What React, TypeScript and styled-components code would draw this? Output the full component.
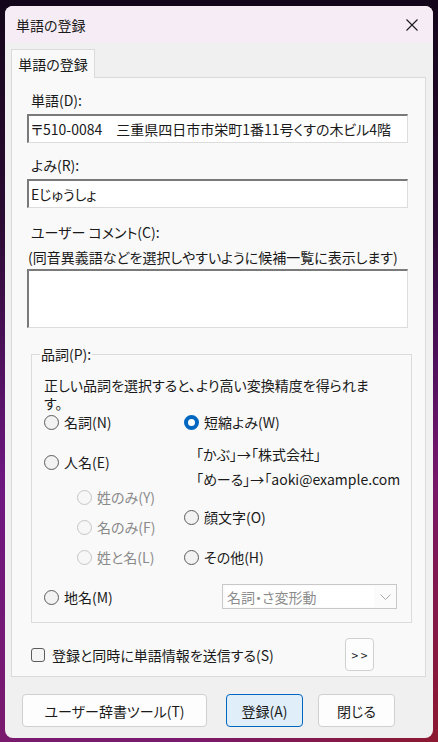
import React from 'react';
import styled, { createGlobalStyle } from 'styled-components';

const GlobalStyle = createGlobalStyle`
  html, body {
    margin: 0;
    padding: 0;
  }
  body {
    width: 438px;
    height: 742px;
    overflow: hidden;
    font-family: "Noto Sans CJK JP", "Noto Sans", sans-serif;
    font-feature-settings: "palt";
    background:
      radial-gradient(ellipse 60% 50% at 100% 100%, #8c1830 0%, rgba(140, 24, 48, 0) 100%),
      linear-gradient(180deg, #14061a 0%, #2a0a32 30%, #6e1680 65%, #7a1a6e 100%);
  }
`;

const App = () => {
  return (
    <>
      <GlobalStyle />
      <Window>
        <TitleBar>
          <Title>単語の登録</Title>
          <CloseButton>
            <svg width="12" height="12" viewBox="0 0 12 12">
              <path d="M0.5 0.5 L11.5 11.5 M11.5 0.5 L0.5 11.5" stroke="#1a1a1a" strokeWidth="1.1" />
            </svg>
          </CloseButton>
        </TitleBar>
        <Body>
          <TabStrip>
            <Tab>単語の登録</Tab>
          </TabStrip>
          <Panel>
            <Label>単語(D):</Label>
            <TextBox>〒510-0084　三重県四日市市栄町1番11号くすの木ビル4階</TextBox>
            <Label $mt={12}>よみ(R):</Label>
            <TextBox>Eじゅうしょ</TextBox>
            <Label $mt={14}>ユーザー コメント(C):</Label>
            <Hint>(同音異義語などを選択しやすいように候補一覧に表示します)</Hint>
            <TextArea />

            <GroupBox>
              <Legend>品詞(P):</Legend>
              <Note>
                正しい品詞を選択すると、より高い変換精度を得られま
                <br />
                す。
              </Note>
              <Choices>
                <Column>
                  <Radio label="名詞(N)" />
                  <Radio label="人名(E)" mt={20} />
                  <SubGroup>
                    <Radio label="姓のみ(Y)" disabled />
                    <Radio label="名のみ(F)" disabled />
                    <Radio label="姓と名(L)" disabled />
                  </SubGroup>
                  <Radio label="地名(M)" mt={20} />
                </Column>
                <Column>
                  <Radio label="短縮よみ(W)" checked />
                  <Example $mt={12}>「かぶ」→「株式会社」</Example>
                  <Example $mt={5}>「めーる」→「aoki@example.com</Example>
                  <Radio label="顔文字(O)" mt={18} />
                  <Radio label="その他(H)" mt={20} />
                  <Select>
                    <SelectValue>名詞・さ変形動</SelectValue>
                    <SelectArrow>
                      <svg width="11" height="6" viewBox="0 0 11 6">
                        <path d="M0.5 0.5 L5.5 5.5 L10.5 0.5" fill="none" stroke="#a8a8a8" strokeWidth="1" />
                      </svg>
                    </SelectArrow>
                  </Select>
                </Column>
              </Choices>
            </GroupBox>

            <SendRow>
              <CheckLabel>
                <CheckBox />
                登録と同時に単語情報を送信する(S)
              </CheckLabel>
              <MoreButton>&gt; &gt;</MoreButton>
            </SendRow>
          </Panel>

          <Footer>
            <Button $width={185} $after={4}>ユーザー辞書ツール(T)</Button>
            <Button $width={77} $primary>登録(A)</Button>
            <Button $width={77}>閉じる</Button>
          </Footer>
        </Body>
      </Window>
    </>
  );
};

export default App;

interface RadioProps {
  label: string;
  checked?: boolean;
  disabled?: boolean;
  mt?: number;
}

const Radio = ({ label, checked, disabled, mt = 0 }: RadioProps) => (
  <RadioRow $mt={mt} $disabled={disabled}>
    <RadioCircle $checked={checked} $disabled={disabled} />
    {label}
  </RadioRow>
);

const Window = styled('div')`
  margin: 6px 0 0 5px;
  width: 428px;
  height: 732px;
  border-radius: 8px;
  overflow: hidden;
  background: #f0f0f0;
  display: flex;
  flex-direction: column;
  color: #1a1a1a;
  font-size: 14px;
`;

const TitleBar = styled('div')`
  height: 37px;
  background: #f6ecf5;
  display: flex;
  align-items: center;
  justify-content: space-between;
  padding: 0 15px 0 11px;
`;

const Title = styled('span')`
  font-size: 14px;
  color: #1a1a1a;
`;

const CloseButton = styled('div')`
  width: 12px;
  height: 12px;
  display: flex;
`;

const Body = styled('div')`
  flex: 1;
  display: flex;
  flex-direction: column;
  padding: 6px 7px 0 6px;
`;

const TabStrip = styled('div')`
  display: flex;
  position: relative;
  z-index: 1;
  margin-bottom: -1px;
`;

const Tab = styled('div')`
  width: 84px;
  height: 29px;
  box-sizing: border-box;
  background: #f9f9f9;
  border: 1px solid #dadada;
  border-bottom: none;
  display: flex;
  align-items: center;
  justify-content: center;
  font-size: 14px;
`;

const Panel = styled('div')`
  background: #f9f9f9;
  border: 1px solid #dadada;
  padding: 12px 17px 5px 15px;
  display: flex;
  flex-direction: column;
`;

const Label = styled('div')<{ $mt?: number }>`
  line-height: 20px;
  margin: ${(props) => props.$mt || 0}px 0 4px 4px;
`;

const Hint = styled('div')`
  line-height: 20px;
  margin: 1px 0 2px 1px;
  white-space: nowrap;
`;

const TextBox = styled('div')`
  height: 29px;
  box-sizing: border-box;
  background: #ffffff;
  border-style: solid;
  border-width: 2px 1px 1px 2px;
  border-color: #7a7a7a #dcdcdc #dcdcdc #7a7a7a;
  padding: 0 2px;
  display: flex;
  align-items: center;
  white-space: nowrap;
  overflow: hidden;
  font-size: 14px;
`;

const TextArea = styled(TextBox)`
  height: 59px;
`;

const GroupBox = styled('fieldset')`
  margin: 16px -4px 0 4px;
  padding: 0 12px 13px 12px;
  border: 1px solid #dcdcdc;
  min-width: 0;
`;

const Legend = styled('legend')`
  padding: 0 1px;
  margin-left: -4px;
  line-height: 20px;
`;

const Note = styled('div')`
  margin-top: 12px;
  line-height: 18px;
`;

const Choices = styled('div')`
  display: grid;
  grid-template-columns: 140px 1fr;
  margin-top: 0;
`;

const Column = styled('div')`
  display: flex;
  flex-direction: column;
`;

const SubGroup = styled('div')`
  display: flex;
  flex-direction: column;
  gap: 10px;
  margin: 15px 0 0 33px;
`;

const RadioRow = styled('div')<{ $mt: number; $disabled?: boolean }>`
  height: 20px;
  display: flex;
  align-items: center;
  gap: 5px;
  margin-top: ${(props) => props.$mt}px;
  color: ${(props) => (props.$disabled ? '#8a8a8a' : '#1a1a1a')};
  white-space: nowrap;
`;

const RadioCircle = styled('span')<{ $checked?: boolean; $disabled?: boolean }>`
  width: 15px;
  height: 15px;
  box-sizing: border-box;
  border-radius: 50%;
  flex-shrink: 0;
  background: ${(props) => (props.$checked ? '#ffffff' : props.$disabled ? '#f7f7f7' : '#f2f2f2')};
  border: ${(props) =>
    props.$checked ? '4px solid #0067c0' : props.$disabled ? '1px solid #c6c6c6' : '1px solid #5c5c5c'};
`;

const Example = styled('div')<{ $mt: number }>`
  line-height: 20px;
  margin: ${(props) => props.$mt}px 0 0 12px;
  white-space: nowrap;
`;

const Select = styled('div')`
  margin: 17px 0 0 38px;
  width: 175px;
  height: 25px;
  box-sizing: border-box;
  border: 1px solid #c8c8c8;
  background: #fbfbfb;
  display: flex;
  align-items: center;
`;

const SelectValue = styled('div')`
  flex: 1;
  height: 21px;
  margin-left: 2px;
  padding-left: 2px;
  background: #ffffff;
  color: #8c8c8c;
  display: flex;
  align-items: center;
`;

const SelectArrow = styled('div')`
  width: 22px;
  display: flex;
  justify-content: center;
`;

const SendRow = styled('div')`
  display: flex;
  align-items: center;
  margin: 15px 34px 0 4px;
`;

const CheckLabel = styled('label')`
  display: flex;
  align-items: center;
  gap: 7px;
  white-space: nowrap;
`;

const CheckBox = styled('span')`
  width: 14px;
  height: 14px;
  box-sizing: border-box;
  border: 1px solid #5c5c5c;
  border-radius: 3px;
  background: #f5f5f5;
`;

const MoreButton = styled('div')`
  margin-left: auto;
  width: 29px;
  height: 33px;
  box-sizing: border-box;
  border: 1px solid #d0d0d0;
  border-radius: 4px;
  background: #fdfdfd;
  display: flex;
  align-items: center;
  justify-content: center;
  font-size: 12px;
`;

const Footer = styled('div')`
  display: flex;
  gap: 15px;
  margin: 17px 0 0 11px;
`;

const Button = styled('div')<{ $width: number; $primary?: boolean; $after?: number }>`
  width: ${(props) => props.$width}px;
  height: 33px;
  box-sizing: border-box;
  margin-right: ${(props) => props.$after || 0}px;
  border-radius: 4px;
  border: 1px solid ${(props) => (props.$primary ? '#0067c0' : '#d0d0d0')};
  background: ${(props) => (props.$primary ? '#e0eef9' : '#fdfdfd')};
  display: flex;
  align-items: center;
  justify-content: center;
  font-size: 14px;
`;
